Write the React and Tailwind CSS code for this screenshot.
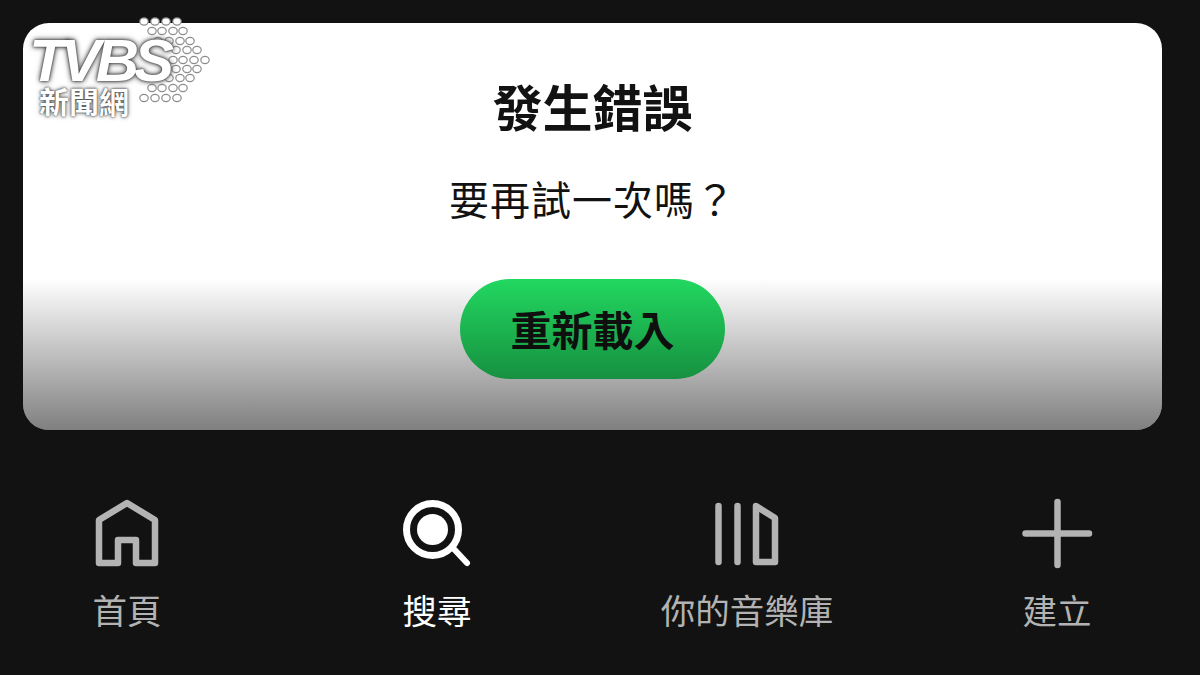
const CJK = "font-['Noto_Sans_CJK_TC','Noto_Sans_CJK_SC',sans-serif]"

// dot rows of the TVBS mark: [y, ...x]
const DOTS = [
  [21.5, 144, 155, 166, 177],
  [31, 152, 162, 173, 183],
  [41, 158, 169, 180, 190],
  [50, 176, 187, 197],
  [60, 173, 183, 194, 205],
  [69, 176, 187, 197],
  [78, 169, 180, 190],
  [88, 152, 162, 173, 183],
  [98, 144, 155, 166, 177],
]

function Logo() {
  return (
    <div className="absolute top-0 left-0 w-[215px] h-[120px]">
      <svg width="215" height="120" viewBox="0 0 215 120" className="absolute top-0 left-0">
        {DOTS.map(([y, ...xs]) =>
          xs.map((x) => <ellipse key={`${x}-${y}`} cx={x} cy={y} rx="4.8" ry="4.2" fill="#8c8c8c" />)
        )}
        {DOTS.map(([y, ...xs]) =>
          xs.map((x) => <ellipse key={`${x}-${y}`} cx={x} cy={y} rx="3.6" ry="3" fill="#fff" />)
        )}
      </svg>
      <span className="absolute left-[29px] top-[38px] text-[60px] leading-[46px] font-bold italic tracking-[-5px] text-white font-['Liberation_Sans',sans-serif] [text-shadow:0_0_2px_#333,0_0_4px_#555,0_0_6px_#777]">
        TVBS
      </span>
      <span className={`absolute left-[39px] top-[86px] text-[30px] leading-[28px] font-bold text-white ${CJK} [text-shadow:0_0_2px_#333,0_0_4px_#555]`}>
        新聞網
      </span>
    </div>
  )
}

function HomeIcon() {
  return (
    <svg width="72" height="72" viewBox="0 0 72 72" fill="none" stroke="#b3b3b3" strokeWidth="6.5" strokeLinejoin="round">
      <path d="M36 5 L64 22 V65 H45 V42 H27 V65 H8 V22 Z" />
    </svg>
  )
}

function SearchIcon() {
  return (
    <svg width="72" height="72" viewBox="0 0 72 72" fill="none" stroke="#fff">
      <circle cx="31.5" cy="31.5" r="26" strokeWidth="7" />
      <circle cx="31.5" cy="31.5" r="15.5" fill="#fff" stroke="none" />
      <path d="M52 50 L66 65" strokeWidth="6" strokeLinecap="round" />
    </svg>
  )
}

function LibraryIcon() {
  return (
    <svg width="72" height="72" viewBox="0 0 72 72" fill="none" stroke="#b3b3b3" strokeWidth="6.5" strokeLinecap="round" strokeLinejoin="round">
      <path d="M7.5 8 V64 M26.5 8 V64" />
      <path d="M45 8 L64 20 V64 H45 Z" />
    </svg>
  )
}

function PlusIcon() {
  return (
    <svg width="72" height="72" viewBox="0 0 72 72" fill="none" stroke="#b3b3b3" strokeWidth="6.5" strokeLinecap="round">
      <path d="M36.5 4 V67 M4.5 35.5 H68" />
    </svg>
  )
}

const TABS = [
  { label: '首頁', icon: HomeIcon, color: 'text-[#b3b3b3]' },
  { label: '搜尋', icon: SearchIcon, color: 'text-white' },
  { label: '你的音樂庫', icon: LibraryIcon, color: 'text-[#b3b3b3]' },
  { label: '建立', icon: PlusIcon, color: 'text-[#b3b3b3]' },
]

export default function App() {
  return (
    <div className={`relative w-[1200px] h-[675px] overflow-hidden bg-[#121212] pt-[23px] ${CJK}`}>
      {/* CARD */}
      <div className="relative ml-[23px] w-[1139px] h-[407px] rounded-[26px] overflow-hidden bg-white flex flex-col items-center pt-[47px]">
        <h1 className="text-[50px] leading-[70px] font-bold text-[#121212]">發生錯誤</h1>
        <p className="mt-[30px] text-[40px] leading-[56px] tracking-[1px] text-[#121212]">要再試一次嗎？</p>
        <button type="button" className="mt-[53px] w-[265px] h-[100px] rounded-full bg-[#22d860] text-[41px] font-semibold text-[#121212]">
          重新載入
        </button>
        {/* fade at the bottom of the card */}
        <div className="absolute left-0 right-0 bottom-0 h-[152px] bg-gradient-to-b from-black/0 to-black/50" />
      </div>

      {/* TABS */}
      <nav className="flex justify-between pl-[41px] pr-[57px] pt-[68px]">
        {TABS.map((t) => (
          <div key={t.label} className={`w-[172px] flex flex-col items-center ${t.color}`}>
            <t.icon />
            <span className="mt-[15px] text-[34.5px] leading-[48px] whitespace-nowrap">{t.label}</span>
          </div>
        ))}
      </nav>

      <Logo />
    </div>
  )
}
